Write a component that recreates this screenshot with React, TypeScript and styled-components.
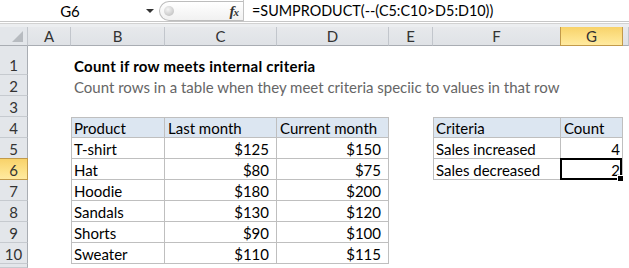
import React from "react";
import styled, { createGlobalStyle } from "styled-components";

const GlobalStyle = createGlobalStyle`
  html, body { margin: 0; padding: 0; background: #fff; }
  body { font-family: Lato, "Noto Sans", sans-serif; }
`;

const Frame = styled.div`
  width: 629px;
  height: 268px;
  overflow: hidden;
  background: #fff;
  display: flex;
  flex-direction: column;
`;

const FormulaBar = styled.div`
  display: flex;
  height: 22px;
  box-sizing: border-box;
  border-bottom: 1px solid #c6c6c6;
  background: #fff;
`;

const NameBox = styled.div`
  width: 159px;
  display: flex;
  align-items: center;
  font-size: 15px;
  color: #000;
`;

const NameText = styled.span`
  width: 140px;
  text-align: center;
`;

const Arrow = styled.span`
  width: 0;
  height: 0;
  margin-left: 6px;
  border-left: 4px solid transparent;
  border-right: 4px solid transparent;
  border-top: 4px solid #333;
`;

const FxArea = styled.div`
  width: 84px;
  box-sizing: border-box;
  margin: 1px 0 0;
  height: 20px;
  border: 1px solid #bdbdbd;
  border-right: none;
  border-radius: 10px 0 0 10px;
  background: linear-gradient(#ffffff, #f1f1f1);
  display: flex;
  align-items: center;
  justify-content: space-between;
  padding: 0 5px 0 4px;
`;

const Knob = styled.span`
  width: 10px;
  height: 10px;
  border-radius: 50%;
  background: radial-gradient(circle at 40% 35%, #f4f4f4, #c9c9c9 70%, #bdbdbd);
`;

const Fx = styled.span`
  font-family: "Liberation Serif", serif;
  font-style: italic;
  font-weight: bold;
  color: #333;
  font-size: 15px;
  letter-spacing: -1px;
  & > small { font-size: 11px; }
`;

const FormulaInput = styled.div`
  flex: 1;
  border-left: 1px solid #c3c3c3;
  padding-left: 8px;
  display: flex;
  align-items: center;
  font-size: 14.4px;
  color: #000;
  white-space: nowrap;
`;

const Band = styled.div`
  height: 5px;
  background: linear-gradient(#ffffff 0 1px, #d2d2d2 1px 2px, #eceef0 2px);
`;

const Sheet = styled.div`
  flex: 1;
  display: grid;
  grid-template-columns: 28px 43px 94px 112px 112px 44px 128px 62px 1fr;
  grid-template-rows: 19px 29px repeat(9, 21px) 1fr;
  font-family: Lato, "Noto Sans", sans-serif;
`;

const Corner = styled.div`
  box-sizing: border-box;
  background: #e3e6ea;
  border-right: 1px solid #c2c6cc;
  border-bottom: 1px solid #a9adb3;
  display: flex;
  align-items: flex-end;
  justify-content: flex-end;
  padding: 0 4px 3px 0;
`;

const ColHead = styled.div<{ $sel?: boolean }>`
  box-sizing: border-box;
  display: flex;
  align-items: center;
  justify-content: center;
  font-size: 15px;
  color: #333;
  background: ${(p) =>
    p.$sel ? "linear-gradient(#f8d26a, #fde28a 60%, #ffeaa0)" : "linear-gradient(#e7e9ec, #dfe2e6)"};
  border-right: 1px solid ${(p) => (p.$sel ? "#c29a4a" : "#c2c6cc")};
  border-bottom: 1px solid ${(p) => (p.$sel ? "#c29a4a" : "#a9adb3")};
  box-shadow: ${(p) => (p.$sel ? "-1px 0 0 #c29a4a" : "none")};
`;

const RowHead = styled.div<{ $sel?: boolean }>`
  box-sizing: border-box;
  display: flex;
  align-items: flex-end;
  justify-content: center;
  overflow: hidden;
  font-size: 15px;
  line-height: 18px;
  color: #333;
  background: ${(p) =>
    p.$sel ? "linear-gradient(#f8d26a, #fde28a 60%, #ffeaa0)" : "#e3e6ea"};
  border-right: 1px solid ${(p) => (p.$sel ? "#c29a4a" : "#a9adb3")};
  border-bottom: 1px solid ${(p) => (p.$sel ? "#c29a4a" : "#c6cacf")};
  box-shadow: ${(p) => (p.$sel ? "0 -1px 0 #c29a4a" : "none")};
`;

type Kind = "title" | "sub" | "text" | "money" | "num";

const Cell = styled.div<{
  $kind: Kind;
  $head?: boolean;
  $bt?: boolean;
  $bl?: boolean;
  $br?: boolean;
  $bb?: boolean;
}>`
  box-sizing: border-box;
  position: relative;
  display: flex;
  align-items: flex-end;
  justify-content: ${(p) => (p.$kind === "money" || p.$kind === "num" ? "flex-end" : "flex-start")};
  padding: 0 ${(p) => (p.$kind === "money" ? 7 : 2)}px 0 ${(p) => (p.$bl ? 2 : 3)}px;
  white-space: nowrap;
  overflow: visible;
  font-size: 15px;
  line-height: 18px;
  font-weight: ${(p) => (p.$kind === "title" ? 700 : 400)};
  letter-spacing: ${(p) => (p.$kind === "title" ? "0.25px" : "normal")};
  color: ${(p) => (p.$kind === "sub" ? "#666666" : "#000")};
  background: ${(p) => (p.$head ? "#dce6f1" : "transparent")};
  border-top: ${(p) => (p.$bt ? "1px solid #bfbfbf" : "none")};
  border-left: ${(p) => (p.$bl ? "1px solid #bfbfbf" : "none")};
  border-right: ${(p) => (p.$br ? "1px solid #bfbfbf" : "none")};
  border-bottom: ${(p) => (p.$bb ? "1px solid #bfbfbf" : "none")};
`;

const Selection = styled.span`
  position: absolute;
  left: -1px;
  top: -1px;
  right: 0;
  bottom: -1px;
  border: 2px solid #000;
  pointer-events: none;
`;

const FillHandle = styled.span`
  position: absolute;
  right: -4px;
  bottom: -4px;
  width: 5px;
  height: 5px;
  background: #000;
  border: 1px solid #fff;
`;

const COLS = ["A", "B", "C", "D", "E", "F", "G", "H"];

type Spec = { text: string; kind?: Kind; head?: boolean };

const products: [string, string, string][] = [
  ["T-shirt", "$125", "$150"],
  ["Hat", "$80", "$75"],
  ["Hoodie", "$180", "$200"],
  ["Sandals", "$130", "$120"],
  ["Shorts", "$90", "$100"],
  ["Sweater", "$110", "$115"],
];

const data: Record<string, Spec> = {
  B1: { text: "Count if row meets internal criteria", kind: "title" },
  B2: { text: "Count rows in a table when they meet criteria speciic to values in that row", kind: "sub" },
  B4: { text: "Product", head: true },
  C4: { text: "Last month", head: true },
  D4: { text: "Current month", head: true },
  F4: { text: "Criteria", head: true },
  G4: { text: "Count", head: true },
  F5: { text: "Sales increased" },
  G5: { text: "4", kind: "num" },
  F6: { text: "Sales decreased" },
  G6: { text: "2", kind: "num" },
};
products.forEach(([p, a, b], i) => {
  const r = i + 5;
  data[`B${r}`] = { text: p };
  data[`C${r}`] = { text: a, kind: "money" };
  data[`D${r}`] = { text: b, kind: "money" };
});

const tables = [
  { c0: 1, c1: 3, r0: 4, r1: 10 },
  { c0: 5, c1: 6, r0: 4, r1: 6 },
];

function borders(c: number, r: number) {
  const t = tables.find((t) => c >= t.c0 && c <= t.c1 && r >= t.r0 && r <= t.r1);
  if (!t) return {};
  return { $bt: r === t.r0, $bl: c === t.c0, $br: true, $bb: true };
}

const SEL_COL = 6;
const SEL_ROW = 6;

export default function App() {
  const rows = Array.from({ length: 10 }, (_, i) => i + 1);
  return (
    <>
      <GlobalStyle />
      <Frame>
        <FormulaBar>
          <NameBox>
            <NameText>G6</NameText>
            <Arrow />
          </NameBox>
          <FxArea>
            <Knob />
            <Fx>
              f<small>x</small>
            </Fx>
          </FxArea>
          <FormulaInput>=SUMPRODUCT(--(C5:C10&gt;D5:D10))</FormulaInput>
        </FormulaBar>
        <Band />
        <Sheet>
          <Corner>
            <svg width="11" height="11" viewBox="0 0 11 11">
              <polygon points="11,0 11,11 0,11" fill="#b7bbc0" />
            </svg>
          </Corner>
          {COLS.map((c, i) => (
            <ColHead key={c} $sel={i === SEL_COL}>
              {c === "H" ? "" : c}
            </ColHead>
          ))}
          {rows.map((r) => (
            <React.Fragment key={r}>
              <RowHead $sel={r === SEL_ROW}>{r}</RowHead>
              {COLS.map((c, ci) => {
                const spec = data[`${c}${r}`];
                const sel = ci === SEL_COL && r === SEL_ROW;
                return (
                  <Cell key={c} $kind={spec?.kind ?? "text"} $head={spec?.head} {...borders(ci, r)}>
                    {spec?.text}
                    {sel && (
                      <Selection>
                        <FillHandle />
                      </Selection>
                    )}
                  </Cell>
                );
              })}
            </React.Fragment>
          ))}
          <RowHead />
        </Sheet>
      </Frame>
    </>
  );
}
